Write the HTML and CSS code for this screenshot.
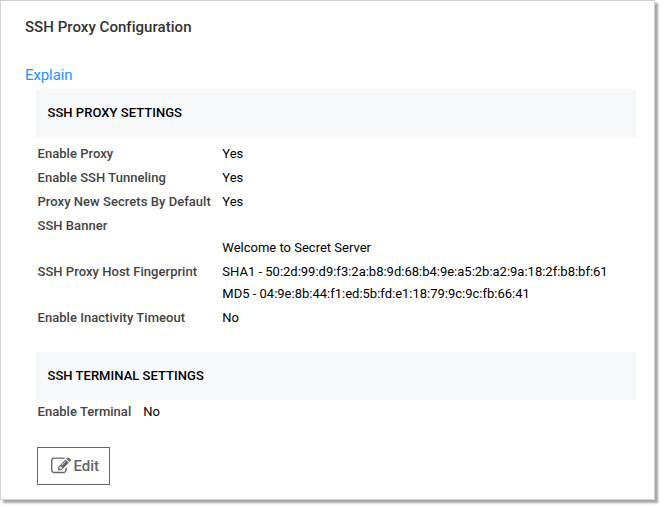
FILE: index.html
```html
<!DOCTYPE html>
<html lang="en">
<head>
<meta charset="utf-8">
<title>SSH Proxy Configuration</title>
<link rel="stylesheet" href="styles.css">
</head>
<body>
<main class="panel">
  <h1 class="title">SSH Proxy Configuration</h1>
  <a class="explain">Explain</a>
  <section class="section">
    <h2 class="section-title">SSH PROXY SETTINGS</h2>
    <dl class="settings">
      <dt>Enable Proxy</dt><dd>Yes</dd>
      <dt>Enable SSH Tunneling</dt><dd>Yes</dd>
      <dt>Proxy New Secrets By Default</dt><dd>Yes</dd>
      <dt>SSH Banner</dt><dd><br>Welcome to Secret Server</dd>
      <dt>SSH Proxy Host Fingerprint</dt><dd>SHA1 - 50:2d:99:d9:f3:2a:b8:9d:68:b4:9e:a5:2b:a2:9a:18:2f:b8:bf:61<br>MD5 - 04:9e:8b:44:f1:ed:5b:fd:e1:18:79:9c:9c:fb:66:41</dd>
      <dt>Enable Inactivity Timeout</dt><dd>No</dd>
    </dl>
  </section>
  <section class="section terminal">
    <h2 class="section-title">SSH TERMINAL SETTINGS</h2>
    <dl class="settings">
      <dt>Enable Terminal</dt><dd>No</dd>
    </dl>
  </section>
  <button class="edit" type="button">
    <svg class="edit-icon" viewBox="0 0 1792 1792"><path d="M888 1184l116-116-152-152-116 116v56h96v96h56zm440-720q-16-16-33 1l-350 350q-17 17-1 33t33-1l350-350q17-17 1-33zm80 594v190q0 119-84.5 203.5t-203.5 84.5h-832q-119 0-203.5-84.5t-84.5-203.5v-832q0-119 84.5-203.5t203.5-84.5h832q63 0 117 25 15 7 18 23 3 17-9 29l-49 49q-14 14-32 8-23-6-45-6h-832q-66 0-113 47t-47 113v832q0 66 47 113t113 47h832q66 0 113-47t47-113v-126q0-13 9-22l64-64q15-15 35-7t20 29zm-96-738l288 288-672 672h-288v-288zm444 132l-92 92-288-288 92-92q28-28 68-28t68 28l152 152q28 28 28 68t-28 68z"/></svg>
    <span>Edit</span>
  </button>
</main>
</body>
</html>
```
FILE: styles.css
```css
* { box-sizing: border-box; }
body {
  min-height: 508px;
  margin: 0;
  background: #fff;
  color: #000;
  font: 13px/22px Roboto, sans-serif;
}
.panel {
  width: 655px;
  height: 500px;
  padding: 15px 18px 0 24px;
  border: 1px solid #d3d3d3;
  background: #fff;
  box-shadow: 3px 3px 2px rgba(0, 0, 0, 0.35);
}
.title {
  margin: 0 0 26px;
  color: #333;
  font-size: 15px;
  font-weight: 500;
  letter-spacing: 0.04px;
  line-height: 22px;
}
.explain {
  display: block;
  height: 25px;
  color: #1e90ff;
  font-size: 15px;
  letter-spacing: -0.1px;
}
.section { margin-left: 11px; }
.terminal { margin-top: 23px; }
.section-title {
  height: 48px;
  margin: 0;
  padding-left: 11.5px;
  background: #f7f8fa;
  font-size: 13px;
  font-weight: 500;
  letter-spacing: 0.04px;
  line-height: 48px;
}
.settings {
  display: grid;
  grid-template-columns: max-content 1fr;
  gap: 2px 11.5px;
  margin: 0;
  padding: 6px 0 0 1.5px;
}
.terminal .settings {
  column-gap: 12px;
  padding-top: 1px;
}
.settings dt {
  color: #444;
  font-weight: 500;
  letter-spacing: 0.04px;
}
.settings dd { margin: 0; }
.edit {
  display: flex;
  align-items: center;
  gap: 2.5px;
  width: 73px;
  height: 38px;
  margin: 24px 0 0 12px;
  padding: 0 0 0 13px;
  border: 1px solid #666;
  background: #fff;
  color: #666;
  font: 500 15px/22px Roboto, sans-serif;
}
.edit-icon {
  flex: none;
  width: 20px;
  height: 20px;
  fill: #666;
}
```
